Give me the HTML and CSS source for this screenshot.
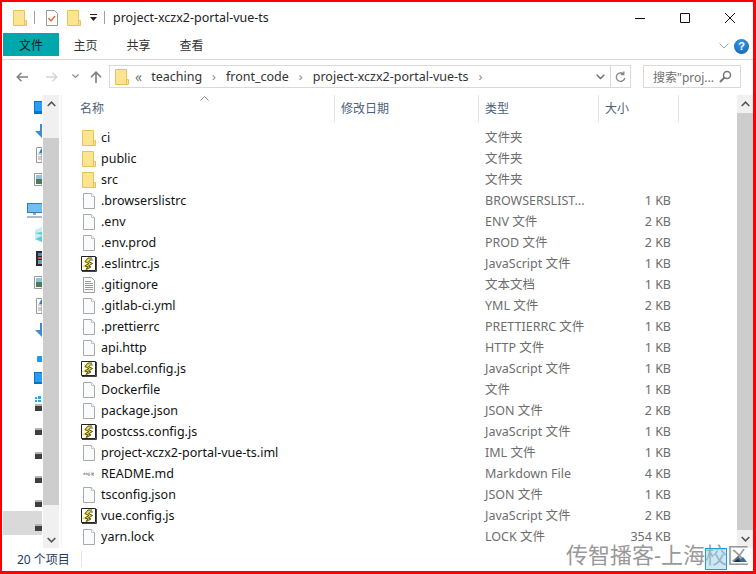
FILE: index.html
```html
<!DOCTYPE html>
<html>
<head>
    <meta charset="UTF-8">
    <title>project-xczx2-portal-vue-ts</title>
    <link rel="stylesheet" href="styles.css">
</head>
<body>
<svg class="defs" width="0" height="0">
    <symbol id="folder" viewBox="0 0 16 16">
        <path d="M1.500 .5h11v15h-11z" fill="#fde48f" stroke="#e8c25a"/>
        <path d="M12.500 10.500h2v5h-2z" fill="#fde48f" stroke="#e8c25a"/>
    </symbol>
    <symbol id="file" viewBox="0 0 16 16">
        <path d="M2.500 .5h8l3 3v12h-11z" fill="#fafbfc" stroke="#a9a9a9"/>
        <path d="M10.500 .5v3h3" fill="#fff" stroke="#c4c4c4"/>
    </symbol>
    <symbol id="notes" viewBox="0 0 16 16">
        <path d="M2.500 .5h8l3 3v12h-11z" fill="#fafbfc" stroke="#a0a0a0"/>
        <path d="M4 4.500h6M4 6.500h8M4 8.500h8M4 10.500h8M4 12.500h8" stroke="#9a9a9a"/>
    </symbol>
    <symbol id="js" viewBox="0 0 16 16">
        <path d="M.5 .5h14v14H.5z" fill="#fff" stroke="#222"/>
        <path d="M1 15.500h14.500V1" fill="none" stroke="#444"/>
        <path d="M11 3H7.500L5 5.500l4.500 2L4.500 10l3.500 1-2.500 2" fill="none" stroke="#e9d92a" stroke-width="2.600"/>
        <path d="M11 2H7L4 5.500l4 2-4 2.500 3 1-2 2.500 5-2.500-2.500-1 4-2.500-4-2 2-1.500h2.500" fill="none" stroke="#33363a" stroke-width=".8"/>
    </symbol>
    <symbol id="md" viewBox="0 0 16 16">
        <path d="M3 3.500h10v9H3z" fill="#fafafa"/>
        <path d="M3 9V7l1.500 1L6 7v2M8 6.500v3M7 8.500l1 1 1-1M11 6.500V9.500M13 7l-2 1 2 1.500" fill="none" stroke="#8c8c8c"/>
    </symbol>
    <symbol id="drive" viewBox="0 0 7 7">
        <path d="M0 0h7v2H0z" fill="#b4b4b4"/>
        <path d="M0 2h7v5H0z" fill="#3f3f3f"/>
    </symbol>
</svg>

<div class="window">
    <div class="titlebar">
        <svg class="ic-folder-title"><use href="#folder"/></svg>
        <span class="title-sep"></span>
        <svg class="ic-props" width="14" height="16" viewBox="0 0 14 16">
            <path d="M1.500 .5h8l3 3v12h-11z" fill="#fff" stroke="#9a9a9a"/>
            <path d="M3.500 8l2.500 3 4-5" fill="none" stroke="#e2673a" stroke-width="1.400"/>
        </svg>
        <svg class="ic-folder-title2"><use href="#folder"/></svg>
        <svg class="ic-qat" width="7" height="9" viewBox="0 0 7 9">
            <path d="M0 0h7v1H0zM0 3h7L3.500 7z" fill="#222"/>
        </svg>
        <span class="title-sep title-sep2"></span>
        <span class="title-text">project-xczx2-portal-vue-ts</span>
        <div class="win-buttons">
            <svg width="10" height="10" viewBox="0 0 10 10"><path d="M0 5.500h10" stroke="#111"/></svg>
            <svg width="10" height="10" viewBox="0 0 10 10"><path d="M.5 .5h9v9h-9z" fill="none" stroke="#111"/></svg>
            <svg width="10" height="10" viewBox="0 0 10 10"><path d="M0 0l10 10M10 0L0 10" stroke="#111"/></svg>
        </div>
    </div>

    <div class="ribbon">
        <span class="tab tab-file">文件</span>
        <span class="tab">主页</span>
        <span class="tab">共享</span>
        <span class="tab">查看</span>
        <svg class="ribbon-chevron" width="10" height="6" viewBox="0 0 10 6"><path d="M.5 .5L5 5 9.500 .5" fill="none" stroke="#a8a8a8"/></svg>
        <span class="help">?</span>
    </div>

    <div class="navbar">
        <svg class="nav-back" width="12" height="10" viewBox="0 0 12 10"><path d="M12 5H1.500M5.500 .8L1.300 5l4.200 4.200" fill="none" stroke="#7f7f7f" stroke-width="1.500"/></svg>
        <svg class="nav-forward" width="12" height="10" viewBox="0 0 12 10"><path d="M0 5h10.500M6.500 .8L10.700 5 6.500 9.200" fill="none" stroke="#d4d4d4" stroke-width="1.500"/></svg>
        <svg class="nav-recent" width="7" height="5" viewBox="0 0 7 5"><path d="M.5 .5l3 3 3-3" fill="none" stroke="#8a8a8a" stroke-width="1.200"/></svg>
        <svg class="nav-up" width="12" height="12" viewBox="0 0 12 12"><path d="M6 12V1.500M1 6.200L6 1.200l5 5" fill="none" stroke="#7f7f7f" stroke-width="1.600"/></svg>
        <div class="address">
            <svg class="ic-folder-addr"><use href="#folder"/></svg>
            <span class="crumb-more">«</span>
            <span class="crumb">teaching</span><span class="crumb-sep">›</span>
            <span class="crumb">front_code</span><span class="crumb-sep">›</span>
            <span class="crumb">project-xczx2-portal-vue-ts</span><span class="crumb-sep">›</span>
            <svg class="addr-drop" width="9" height="6" viewBox="0 0 9 6"><path d="M.7 .7l3.800 3.800L8.300 .7" fill="none" stroke="#6d6d6d" stroke-width="1.400"/></svg>
            <span class="addr-refresh">
                <svg width="11" height="12" viewBox="0 0 11 12"><path d="M8.800 3.200A4.300 4.300 0 1 0 9.800 7M8.800 .5v3h-3" fill="none" stroke="#858585" stroke-width="1.300"/></svg>
            </span>
        </div>
        <div class="search">
            <span>搜索"proj...</span>
            <svg width="13" height="13" viewBox="0 0 13 13"><circle cx="8" cy="5" r="3.500" fill="none" stroke="#777" stroke-width="1.500"/><path d="M5.500 7.500L1 12" stroke="#777" stroke-width="2"/></svg>
        </div>
    </div>

    <div class="main">
        <div class="navpane">
            <div class="nav-icons">
                <span class="ni"><svg width="8" height="13"><path d="M0 0h8v13H0z" fill="#0a72c4"/><path d="M1 1h7v9H1z" fill="#2a9cf5"/></svg></span>
                <span class="ni"><svg width="7" height="14"><path d="M7 0v14L0 7h5V0z" fill="#3d8ad6"/></svg></span>
                <span class="ni"><svg width="6" height="16"><path d="M.5 .5H6v15H.5z" fill="#fff" stroke="#999"/><path d="M2 7h4M2 10h4M2 12h4" stroke="#999"/><path d="M3 6l2-4h1v4z" fill="#2a80d0"/></svg></span>
                <span class="ni"><svg width="8" height="13"><path d="M.5 .5H8v12H.5z" fill="#fff" stroke="#999"/><path d="M2 2h6v4H2z" fill="#8fc4dc"/><path d="M2 6h6v5H2z" fill="#4b7a5c"/></svg></span>
                <span class="ni ni-monitor"><svg width="15" height="15"><path d="M0 0h15v10H0z" fill="#3a7ca8"/><path d="M1 1h14v8H1z" fill="#6ec0f5"/><path d="M6 10h3v2H6z" fill="#9ab"/><path d="M0 13h15v2H0z" fill="#a9bccb"/></svg></span>
                <span class="ni"><svg width="7" height="15"><path d="M0 3l7-3v15l-7-3z" fill="#c8ecec"/><path d="M0 6l7 2v-3zM0 12l7-3v6z" fill="#54cfd6"/></svg></span>
                <span class="ni"><svg width="6" height="15"><path d="M0 0h6v15H0z" fill="#2b2b2b"/><path d="M2 2h4v3H2z" fill="#5a7ec0"/><path d="M2 6h4v2H2z" fill="#d0505a"/><path d="M2 9h4v4H2z" fill="#68a0b0"/></svg></span>
                <span class="ni"><svg width="8" height="13"><path d="M.5 .5H8v12H.5z" fill="#fff" stroke="#999"/><path d="M2 2h6v4H2z" fill="#8fc4dc"/><path d="M2 6h6v5H2z" fill="#4b7a5c"/></svg></span>
                <span class="ni"><svg width="6" height="16"><path d="M.5 .5H6v15H.5z" fill="#fff" stroke="#999"/><path d="M2 7h4M2 10h4M2 12h4" stroke="#999"/><path d="M3 6l2-4h1v4z" fill="#2a80d0"/></svg></span>
                <span class="ni"><svg width="7" height="14"><path d="M7 0v14L0 7h5V0z" fill="#3d8ad6"/></svg></span>
                <span class="ni ni-cloud"><svg width="5" height="6"><path d="M0 3a3 3 0 0 1 5-3v6H1a2 2 0 0 1-1-3z" fill="#1a9cf0"/></svg></span>
                <span class="ni ni-tablet"><svg width="8" height="12"><path d="M0 0h8v12H0z" fill="#0a72c4"/><path d="M1 1h7v9H1z" fill="#2a9cf5"/></svg></span>
                <span class="ni ni-win"><svg width="6" height="6"><path d="M0 1h2v2H0zM3 0h3v3H3zM0 4h2v2H0zM3 4h3v2H3z" fill="#1eaaf0"/></svg></span>
                <span class="ni ni-drive"><svg width="7" height="7"><use href="#drive"/></svg></span>
                <span class="ni ni-drive"><svg width="7" height="7"><use href="#drive"/></svg></span>
                <span class="ni ni-drive"><svg width="7" height="7"><use href="#drive"/></svg></span>
                <span class="ni ni-drive"><svg width="7" height="7"><use href="#drive"/></svg></span>
                <span class="ni ni-drive"><svg width="7" height="7"><use href="#drive"/></svg></span>
                <span class="ni ni-drive ni-selected"><svg width="7" height="7"><use href="#drive"/></svg></span>
            </div>
            <div class="scrollbar scrollbar-nav">
                <span class="sb-btn"><svg width="9" height="6" viewBox="0 0 9 6"><path d="M.7 5L4.500 1.200 8.300 5" fill="none" stroke="#555" stroke-width="1.600"/></svg></span>
                <span class="sb-thumb"></span>
                <span class="sb-btn"><svg width="9" height="6" viewBox="0 0 9 6"><path d="M.7 1l3.800 3.800L8.300 1" fill="none" stroke="#555" stroke-width="1.600"/></svg></span>
            </div>
        </div>

        <div class="list">
            <div class="head">
                <span class="col col-name">名称</span>
                <span class="col col-date">修改日期</span>
                <span class="col col-type">类型</span>
                <span class="col col-size">大小</span>
                <svg class="sort" width="9" height="5" viewBox="0 0 9 5"><path d="M.5 4.500l4-4 4 4" fill="none" stroke="#8a8a8a"/></svg>
            </div>
            <div class="rows">
                <div class="row"><svg class="ic"><use href="#folder"/></svg><span class="name">ci</span><span class="type">文件夹</span><span class="size"></span></div>
                <div class="row"><svg class="ic"><use href="#folder"/></svg><span class="name">public</span><span class="type">文件夹</span><span class="size"></span></div>
                <div class="row"><svg class="ic"><use href="#folder"/></svg><span class="name">src</span><span class="type">文件夹</span><span class="size"></span></div>
                <div class="row"><svg class="ic"><use href="#file"/></svg><span class="name">.browserslistrc</span><span class="type">BROWSERSLIST...</span><span class="size">1 KB</span></div>
                <div class="row"><svg class="ic"><use href="#file"/></svg><span class="name">.env</span><span class="type">ENV 文件</span><span class="size">2 KB</span></div>
                <div class="row"><svg class="ic"><use href="#file"/></svg><span class="name">.env.prod</span><span class="type">PROD 文件</span><span class="size">2 KB</span></div>
                <div class="row"><svg class="ic"><use href="#js"/></svg><span class="name">.eslintrc.js</span><span class="type">JavaScript 文件</span><span class="size">1 KB</span></div>
                <div class="row"><svg class="ic"><use href="#notes"/></svg><span class="name">.gitignore</span><span class="type">文本文档</span><span class="size">1 KB</span></div>
                <div class="row"><svg class="ic"><use href="#file"/></svg><span class="name">.gitlab-ci.yml</span><span class="type">YML 文件</span><span class="size">2 KB</span></div>
                <div class="row"><svg class="ic"><use href="#file"/></svg><span class="name">.prettierrc</span><span class="type">PRETTIERRC 文件</span><span class="size">1 KB</span></div>
                <div class="row"><svg class="ic"><use href="#file"/></svg><span class="name">api.http</span><span class="type">HTTP 文件</span><span class="size">1 KB</span></div>
                <div class="row"><svg class="ic"><use href="#js"/></svg><span class="name">babel.config.js</span><span class="type">JavaScript 文件</span><span class="size">1 KB</span></div>
                <div class="row"><svg class="ic"><use href="#file"/></svg><span class="name">Dockerfile</span><span class="type">文件</span><span class="size">1 KB</span></div>
                <div class="row"><svg class="ic"><use href="#file"/></svg><span class="name">package.json</span><span class="type">JSON 文件</span><span class="size">2 KB</span></div>
                <div class="row"><svg class="ic"><use href="#js"/></svg><span class="name">postcss.config.js</span><span class="type">JavaScript 文件</span><span class="size">1 KB</span></div>
                <div class="row"><svg class="ic"><use href="#file"/></svg><span class="name">project-xczx2-portal-vue-ts.iml</span><span class="type">IML 文件</span><span class="size">1 KB</span></div>
                <div class="row"><svg class="ic"><use href="#md"/></svg><span class="name">README.md</span><span class="type">Markdown File</span><span class="size">4 KB</span></div>
                <div class="row"><svg class="ic"><use href="#file"/></svg><span class="name">tsconfig.json</span><span class="type">JSON 文件</span><span class="size">1 KB</span></div>
                <div class="row"><svg class="ic"><use href="#js"/></svg><span class="name">vue.config.js</span><span class="type">JavaScript 文件</span><span class="size">2 KB</span></div>
                <div class="row"><svg class="ic"><use href="#file"/></svg><span class="name">yarn.lock</span><span class="type">LOCK 文件</span><span class="size">354 KB</span></div>
            </div>
        </div>

        <div class="scrollbar scrollbar-list">
            <span class="sb-btn"><svg width="9" height="6" viewBox="0 0 9 6"><path d="M.7 5L4.500 1.200 8.300 5" fill="none" stroke="#555" stroke-width="1.600"/></svg></span>
            <span class="sb-thumb"></span>
            <span class="sb-btn"><svg width="9" height="6" viewBox="0 0 9 6"><path d="M.7 1l3.800 3.800L8.300 1" fill="none" stroke="#555" stroke-width="1.600"/></svg></span>
        </div>
    </div>

    <div class="statusbar">
        <span class="status-count">20 个项目</span>
        <span class="status-sep"></span>
    </div>

    <div class="watermark">传智播客-上海校区</div>
    <div class="thumb-box"></div>
    <svg class="thumb-pic" width="14" height="7" viewBox="0 0 14 7"><path d="M0 7l5-6 3 3 2-2 4 5z" fill="#3d6f96"/><path d="M1 7l4-3 3 3z" fill="#1c3144"/></svg>
</div>
</body>
</html>
```

FILE: styles.css
```css
* {
    box-sizing: border-box;
}

html, body {
    margin: 0;
    padding: 0;
    height: 100%;
    background: #fff;
}

.defs {
    position: absolute;
}

svg {
    display: block;
    flex: none;
}

.window {
    position: relative;
    width: 756px;
    height: 574px;
    display: flex;
    flex-direction: column;
    overflow: hidden;
    border: solid #f00;
    border-width: 2px 3px 3px 2px;
    background: #fff;
    color: #000;
    font-family: "Noto Sans", "Noto Sans CJK SC", sans-serif;
    font-size: 12px;
}

/* title bar */
.titlebar {
    height: 31px;
    flex: none;
    display: flex;
    align-items: center;
    padding-left: 10px;
}

.ic-folder-title, .ic-folder-title2, .ic-folder-addr {
    width: 16px;
    height: 16px;
}

.title-sep {
    width: 1px;
    height: 13px;
    margin-left: 6px;
    background: #a0a0a0;
}

.ic-props {
    margin-left: 10px;
}

.ic-folder-title2 {
    margin-left: 7px;
}

.ic-qat {
    margin-left: 8px;
    margin-top: 2px;
}

.title-sep2 {
    margin-left: 7px;
}

.title-text {
    margin-left: 8px;
    font-size: 12.500px;
    color: #222;
}

.win-buttons {
    margin-left: auto;
    display: flex;
    gap: 35px;
    padding-right: 18px;
}

/* ribbon */
.ribbon {
    height: 27px;
    flex: none;
    display: flex;
    align-items: flex-start;
    padding-left: 1px;
    border-bottom: 1px solid #d9d9d9;
}

.tab {
    width: 53px;
    height: 23px;
    line-height: 25px;
    text-align: center;
    color: #333;
}

.tab-file {
    width: 56px;
    background: #00a8ae;
    color: #102020;
}

.ribbon-chevron {
    margin: 10px 0 0 auto;
}

.help {
    width: 15px;
    height: 15px;
    margin: 6px 4px 0 5px;
    border-radius: 50%;
    background: radial-gradient(circle at 50% 30%, #3b97e6, #0b62b8);
    color: #fff;
    font: bold 11px/15px "Liberation Sans", sans-serif;
    text-align: center;
}

/* navigation bar */
.navbar {
    height: 35px;
    flex: none;
    display: flex;
    align-items: center;
    padding: 0 11px 2px 14px;
}

.nav-forward {
    margin-left: 18px;
}

.nav-recent {
    margin-left: 14px;
}

.nav-up {
    margin-left: 11px;
}

.address {
    width: 522px;
    height: 23px;
    margin-left: 7px;
    display: flex;
    align-items: center;
    border: 1px solid #d9d9d9;
    color: #333;
    font-size: 12.500px;
}

.ic-folder-addr {
    margin-left: 4px;
}

.crumb-more {
    margin-left: 5px;
    color: #777;
    font-size: 14px;
}

.crumb-more + .crumb {
    margin-left: 9px;
}

.crumb-sep {
    margin: 0 10px;
    color: #888;
}

.addr-drop {
    margin-left: auto;
    margin-right: 5px;
}

.addr-refresh {
    width: 20px;
    height: 21px;
    display: flex;
    align-items: center;
    justify-content: center;
    border-left: 1px solid #d9d9d9;
}

.search {
    width: 98px;
    height: 23px;
    margin-left: 12px;
    display: flex;
    align-items: center;
    justify-content: space-between;
    padding: 0 8px 0 9px;
    border: 1px solid #d9d9d9;
    color: #707070;
}

/* main area */
.main {
    flex: 1;
    min-height: 0;
    display: flex;
}

.navpane {
    width: 60px;
    flex: none;
    display: flex;
    border-right: 1px solid #efefef;
}

.nav-icons {
    width: 39px;
    margin: 0 1px;
    flex: none;
    height: 100%;
    overflow: hidden;
    display: flex;
    flex-direction: column;
}

.ni {
    height: 24px;
    flex: none;
    display: flex;
    align-items: center;
    justify-content: flex-end;
}

.ni-monitor {
    margin-top: 7px;
}

.ni-cloud {
    margin-top: 7px;
    height: 20px;
}

.ni-tablet {
    height: 18px;
}

.ni-win {
    padding-right: 1px;
    margin-bottom: -20px;
}

.ni-drive {
    padding-top: 8px;
}

.ni-selected {
    background: #d9d9d9;
}

.scrollbar {
    display: flex;
    flex-direction: column;
    background: #f0f0f0;
}

.scrollbar-nav {
    width: 16px;
    height: 453px;
}

.scrollbar-nav .sb-btn {
    height: 43px;
}

.scrollbar-nav .sb-btn:first-child {
    padding-top: 6px;
    align-items: flex-start;
}

.scrollbar-nav .sb-btn:last-child {
    align-items: flex-end;
    padding-bottom: 5px;
}

.sb-btn {
    height: 18px;
    flex: none;
    display: flex;
    align-items: center;
    justify-content: center;
}

.sb-thumb {
    flex: 1;
    background: #cdcdcd;
}

.list {
    flex: 1;
    min-width: 0;
}

.head {
    position: relative;
    height: 27px;
    display: flex;
}

.col {
    height: 27px;
    line-height: 27px;
    padding-left: 6px;
    border-right: 1px solid #e5e5e5;
    color: #4c607a;
}

.col-name {
    width: 273px;
    padding-left: 18px;
}

.col-date {
    width: 144px;
}

.col-type {
    width: 120px;
}

.col-size {
    width: 80px;
}

.sort {
    position: absolute;
    left: 138px;
    top: 1px;
}

.rows {
    padding-top: 5px;
}

.row {
    height: 21px;
    display: flex;
    align-items: center;
    padding-left: 19px;
    font-size: 12.500px;
    line-height: 14px;
}

.ic {
    width: 16px;
    height: 16px;
}

.name {
    width: 388px;
    padding-left: 4px;
    color: #111;
    white-space: nowrap;
}

.type {
    width: 120px;
    color: #6d6d6d;
    white-space: nowrap;
}

.size {
    width: 66px;
    text-align: right;
    color: #6d6d6d;
}

.scrollbar-list {
    width: 16px;
    height: 453px;
    flex: none;
}

/* status bar */
.statusbar {
    height: 26px;
    flex: none;
    display: flex;
    align-items: center;
    padding: 1px 0 0 15px;
    color: #1f3a5f;
}

.status-sep {
    width: 1px;
    height: 16px;
    margin-left: 11px;
    background: #e6e6e6;
}

/* overlays */
.watermark {
    position: absolute;
    right: 4px;
    bottom: 6px;
    font-size: 22px;
    line-height: 22px;
    color: #999;
    white-space: nowrap;
}

.thumb-box {
    position: absolute;
    left: 703px;
    top: 546px;
    width: 22px;
    height: 22px;
    border: 1px solid #1e9ed8;
    background: rgba(150, 210, 240, .5);
}

.thumb-pic {
    position: absolute;
    left: 731px;
    top: 553px;
}
```
